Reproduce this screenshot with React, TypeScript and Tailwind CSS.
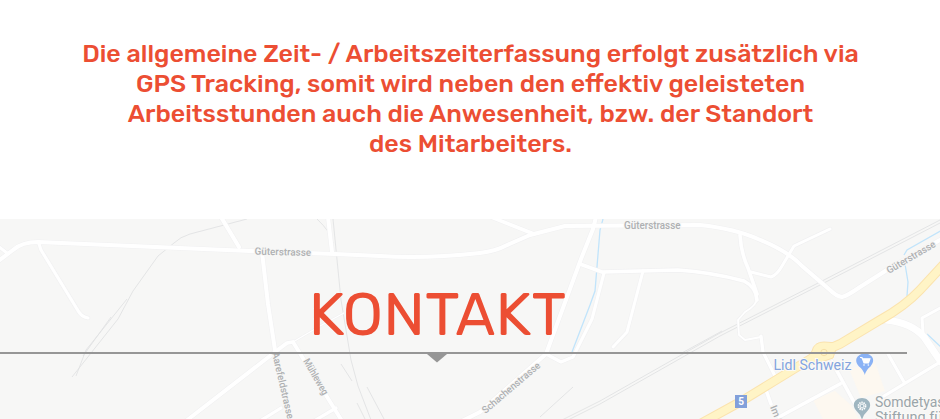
const roads: [string, number][] = [
  ["M-3 262L13 250Q22 242 38 242L250 251L335 254L380 256Q425 259 480 253Q496 251 505 246L530 235L565 226L700 225Q736 229 758 239Q788 251 802 266L830 290Q836 296 842 297Q847 296 860 287L890 268L940 240", 4],
  ["M-2 246L7 253", 3],
  ["M39 244L41 250L77 309Q81 317 88 318", 3.2],
  ["M221 217L239 247", 4],
  ["M262 252L268 304L275 350", 4],
  ["M186 421L275 352L287 343L293 342L304 360L324 392L342 421", 3.8],
  ["M293 342L320 326L344 313", 1.2],
  ["M260 421L281 408M314 421L336 408", 3.2],
  ["M328 217L332 252", 4],
  ["M596 217L593 229L581 259L546 354L480 412L462 421", 4],
  ["M546 354L561 362L573 357L592 319L604 273", 3.2],
  ["M580 264L602 272L678 270Q710 272 744 281Q756 287 757 300", 3.6],
  ["M757 298Q757 305 745 312L738 320L739 335L745 340L761 337", 1.8],
  ["M761 336L763 352L776 378", 3.2],
  ["M491 217L534 234", 3.6],
  ["M643 271L627 332L613 347", 3],
  ["M740 235Q741 253 748 268L757 294", 3.6],
  ["M751 272L771 277Q777 275 782 266L794 246L830 229", 3],
  ["M886 320Q912 323 924 337L941 362", 7],
  ["M942 307L922 318L923 332", 3],
  ["M942 361L884 396M888 354L904 382", 3.2],
  ["M832 362L855 404M766 390L771 404M779 417L840 384", 3.6],
];

const railways = [
  "M247 219L190 234Q180 237 174 243L158 256L133 291L118 319L72 377",
  "M127 299L86 350L76 376M111 317L83 356",
  "M317 219Q331 232 333 243M333 219L341 300L351 360L358 386L371 420M341 364L352 381M367 387L384 419M357 403L365 419",
  "M942 219L822 281L720 333L600 401L562 420M942 222L822 284L720 336L600 404L568 420M722 331L680 354M573 387L540 417",
];

const yellowRoad = "M700 424L740 402L776 380L812 358L824 351L840 344L880 320Q905 306 920 290L944 264";

function MapBackdrop() {
  return (
    <svg viewBox="0 219 940 200" className="absolute inset-0 h-full w-full" fontFamily="Roboto, sans-serif" aria-hidden="true">
      <path d="M849 369L875 362L885 391L861 398ZM813 400L835 391L851 405L859 419H823Z" fill="#fdf8f0" />
      <g fill="none" stroke="#e1e2e3" strokeWidth="0.9">
        {railways.map((d) => <path key={d} d={d} />)}
      </g>
      <g fill="none" stroke="#c1e4fb" strokeWidth="1.3">
        <path d="M603 219L600 230L595 291L590 305L572 352M942 230L907 250L904 255M905 264L908 282L907 296M927 334L942 348" />
      </g>
      <g fill="none" strokeLinecap="round" strokeLinejoin="round">
        {roads.map(([d, w]) => <path key={d} d={d} stroke="#f1f1f2" strokeWidth={w + 1.2} />)}
        {roads.map(([d, w]) => <path key={d} d={d} stroke="#ffffff" strokeWidth={w} />)}
      </g>
      <path d={yellowRoad} fill="none" stroke="#fbe3ae" strokeWidth="9.600" />
      <path d="M812 351Q814 342 824 342L838 343L833 358L813 365L806 360Z" fill="#fff4c6" stroke="#fbe3ae" />
      <path d={yellowRoad} fill="none" stroke="#fff4c6" strokeWidth="7.600" />
      <circle cx="824" cy="352.5" r="3.2" fill="#fff4c6" stroke="#f7e0a6" />
      <g fill="#aeb0b2" stroke="#f7f7f6" strokeWidth="2" paintOrder="stroke" fontSize="10" fontWeight="500">
        <text transform="translate(254.500 254.500) rotate(1.500)" textLength="56.500" lengthAdjust="spacingAndGlyphs">Güterstrasse</text>
        <text x="624" y="229" textLength="56.500" lengthAdjust="spacingAndGlyphs">Güterstrasse</text>
        <text transform="translate(889 274) rotate(-30.500)" textLength="55" lengthAdjust="spacingAndGlyphs">Güterstrasse</text>
        <text transform="translate(272 353) rotate(77)" textLength="68" lengthAdjust="spacingAndGlyphs">Aarefeldstrasse</text>
        <text transform="translate(303 361) rotate(60)" textLength="40" lengthAdjust="spacingAndGlyphs">Mühleweg</text>
        <text transform="translate(485.500 414) rotate(-40.500)" textLength="73" lengthAdjust="spacingAndGlyphs">Schachenstrasse</text>
        <text transform="translate(770 407) rotate(68)">Im Grund</text>
      </g>
      <rect x="735" y="395" width="12" height="13" fill="#82a0da" />
      <text x="741" y="405.300" fill="#fff" fontSize="10" fontWeight="700" textAnchor="middle">5</text>
      <g fontSize="14.500" stroke="#fbfaf7" strokeWidth="2" paintOrder="stroke">
        <text x="773.500" y="370" fill="#83a4de" textLength="78" lengthAdjust="spacingAndGlyphs">Lidl Schweiz</text>
        <text x="875" y="407" fill="#9aa5aa" textLength="81" lengthAdjust="spacingAndGlyphs">Somdetyasa-</text>
        <text x="875" y="422" fill="#9aa5aa" textLength="72" lengthAdjust="spacingAndGlyphs">Stiftung für</text>
      </g>
      <path d="M864.800 375Q863.500 370 859 366.500C852.500 359 859 353.500 864.800 353.500S877 359 870.500 366.500Q866 370 864.800 375Z" fill="#8ab2f5" />
      <path d="M860 357.500H862L864 363H868.500L870 358.700H862.500" fill="#fff" stroke="#fff" strokeWidth="1.100" />
      <circle cx="864" cy="365" r="0.800" fill="#fff" />
      <circle cx="868.300" cy="365" r="0.800" fill="#fff" />
      <path d="M862 420Q861 415 857 411.500C850 404 856 398 862 398S874 404 867 411.500Q863 415 862 420Z" fill="#9fb6c1" />
      <circle cx="862" cy="406" r="3.500" fill="none" stroke="#fff" strokeWidth="1.800" strokeDasharray="1.400 .8" />
      <circle cx="862" cy="406" r="1.900" fill="none" stroke="#fff" strokeWidth="0.900" />
    </svg>
  );
}

export default function App() {
  return (
    <main className="h-[419px] w-[940px] overflow-hidden bg-white font-['Rubik','Roboto',sans-serif] text-[#ec4e33]">
      <section className="flex h-[219px] flex-col items-center pt-[39px] pl-px text-[25px] leading-[30px] font-medium whitespace-nowrap">
        <p>Die allgemeine Zeit- / Arbeitszeiterfassung erfolgt zusätzlich via</p>
        <p>GPS Tracking, somit wird neben den effektiv geleisteten</p>
        <p>Arbeitsstunden auch die Anwesenheit, bzw. der Standort</p>
        <p>des Mitarbeiters.</p>
      </section>
      <section className="relative h-[200px] bg-[#f7f7f6]">
        <MapBackdrop />
        <div className="relative flex flex-col pt-[61px]">
          <h2 className="h-[72px] w-[875px] text-center text-[60px] leading-[70px] font-normal">KONTAKT</h2>
          <div className="h-[2px] w-[907px] bg-[#969696]" />
          <svg viewBox="0 0 20 9" className="ml-[427px] h-[9px] w-[20px]" aria-hidden="true">
            <path d="M0 0H20L10 8.500Z" fill="#969696" />
          </svg>
        </div>
      </section>
    </main>
  );
}
